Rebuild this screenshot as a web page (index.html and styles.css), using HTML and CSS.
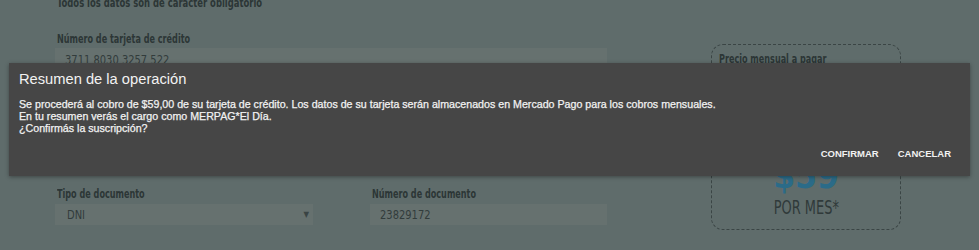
FILE: index.html
```html
<!DOCTYPE html>
<html lang="es">
<head>
    <meta charset="UTF-8">
    <title>Suscripción - Resumen de la operación</title>
    <link rel="stylesheet" href="styles.css">
</head>
<body>

    <div class="page">

        <div class="form">
            <p class="note"><span class="narrow">Todos los datos son de carácter obligatorio</span></p>

            <div class="field">
                <label class="label"><span class="narrow">Número de tarjeta de crédito</span></label>
                <div class="input"><span class="narrow">3711 8030 3257 522</span></div>
            </div>

            <div class="row">
                <div class="field doc-type">
                    <label class="label"><span class="narrow">Tipo de documento</span></label>
                    <div class="input select"><span class="narrow">DNI</span> <span class="arrow">&#9660;</span></div>
                </div>
                <div class="field doc-num">
                    <label class="label"><span class="narrow">Número de documento</span></label>
                    <div class="input"><span class="narrow">23829172</span></div>
                </div>
            </div>
        </div>

        <div class="price">
            <div class="price-title"><span class="narrow">Precio mensual a pagar</span></div>
            <div class="price-amount">$59</div>
            <div class="price-unit"><span class="narrow">POR MES*</span></div>
        </div>

    </div>

    <!-- ventana de confirmación -->
    <div class="dialog">
        <h2 class="dialog-title">Resumen de la operación</h2>
        <div class="dialog-text">
            Se procederá al cobro de $59,00 de su tarjeta de crédito. Los datos de su tarjeta serán almacenados en Mercado Pago para los cobros mensuales.<br>
            En tu resumen verás el cargo como MERPAG*El Día.<br>
            ¿Confirmás la suscripción?
        </div>
        <div class="dialog-actions">
            <span class="btn">CONFIRMAR</span>
            <span class="btn">CANCELAR</span>
        </div>
    </div>

</body>
</html>
```

FILE: styles.css
```css
/*初始化*/
html, body {
    margin: 0;
    padding: 0;
}

body {
    background-color: #5f6c6b;
    height: 250px;
    overflow: hidden;
    position: relative;
}

/*1.页面（被遮罩）*/
.page {
    display: flex;
    gap: 104px;
    padding-left: 55px;
    font-family: "DejaVu Sans", sans-serif;
    font-stretch: condensed;
    color: #2c3636;
}

/*窄体字：页面字体很窄*/
.narrow {
    display: inline-block;
    white-space: nowrap;
    transform: scaleX(0.75);
    transform-origin: left center;
}

.form {
    width: 552px;
}

.note {
    margin: -4px 0 0 2px;
    font-size: 12.5px;
    line-height: 14px;
    font-weight: bold;
}

.field {
    margin-top: 22px;
}

.label {
    display: block;
    margin-left: 2px;
    font-size: 12px;
    line-height: 14px;
    font-weight: bold;
}

.input {
    margin-top: 2px;
    height: 26px;
    line-height: 24px;
    padding: 0 10px;
    background-color: #66716f;
    font-size: 13px;
    color: #323c3c;
    box-sizing: border-box;
}

.input .narrow {
    transform: scaleX(0.85);
}

.row {
    display: flex;
    gap: 57px;
    margin-top: 113px;
}

.row .field {
    margin-top: 0;
}

.row .label {
    margin-bottom: 3px;
}

.row .input {
    height: 21px;
    line-height: 22px;
}

.doc-type {
    width: 258px;
}

.doc-num {
    width: 237px;
}

.select {
    display: flex;
    justify-content: space-between;
    padding-left: 12px;
    padding-right: 4px;
}

.arrow {
    font-size: 8px;
    color: #3a4444;
}

/*2.价格框*/
.price {
    width: 190px;
    height: 186px;
    margin-top: 44px;
    border: 1px dashed #3b4545;
    border-radius: 12px;
    box-sizing: border-box;
    display: flex;
    flex-direction: column;
    align-items: center;
}

.price-title {
    align-self: flex-start;
    margin: 7px 0 0 7px;
    font-size: 12px;
    font-weight: bold;
}

.price-amount {
    margin-top: 93px;
    font-weight: bold;
    font-size: 35px;
    line-height: 34px;
    color: #2b6b88;
}

.price-unit {
    margin-top: 4px;
    font-size: 20px;
    line-height: 20px;
    color: #303a3a;
}

.price-unit .narrow {
    transform: scaleX(0.72);
    transform-origin: center;
}

/*3.弹出框*/
.dialog {
    position: absolute;
    left: 9px;
    top: 63px;
    width: 961px;
    height: 113px;
    box-sizing: border-box;
    padding: 7px 19px 0 10px;
    background-color: #464646;
    box-shadow: 0 1px 4px rgba(0, 0, 0, 0.35);
    font-family: "Liberation Sans", Arial, sans-serif;
    color: #f2f2f2;
}

.dialog-title {
    margin: 0;
    font-size: 14.7px;
    font-weight: normal;
    line-height: 18px;
}

.dialog-text {
    margin-top: 10px;
    font-size: 10.67px;
    line-height: 12px;
    -webkit-text-stroke: 0.25px #f2f2f2;
}

.dialog-actions {
    display: flex;
    justify-content: flex-end;
    gap: 19px;
    margin-top: 14px;
}

.btn {
    font-size: 9.5px;
    font-weight: bold;
    cursor: pointer;
}
```
